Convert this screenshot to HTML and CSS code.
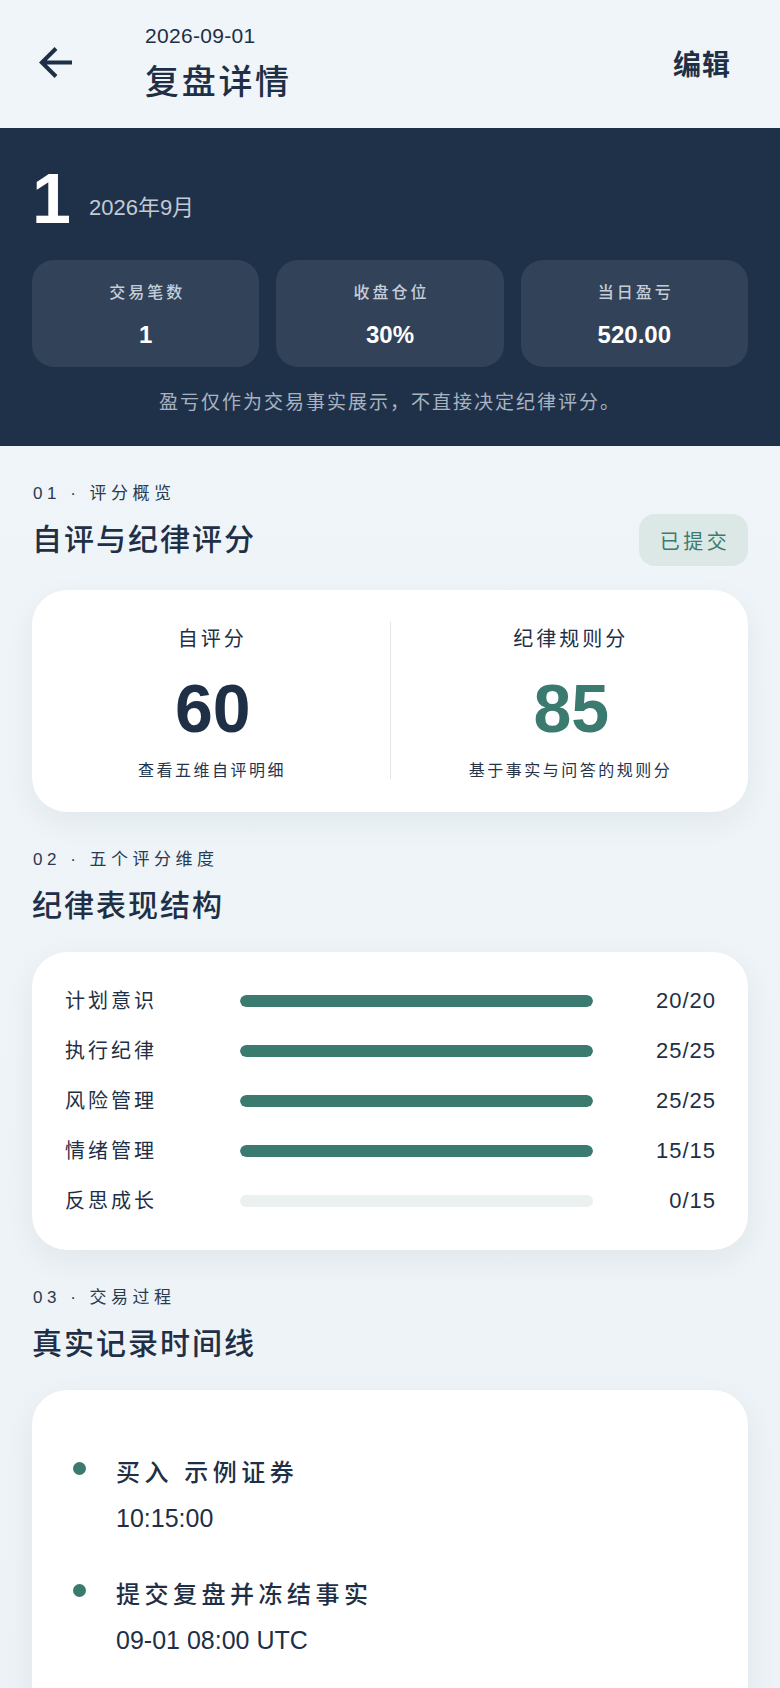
FILE: index.html
```
<!DOCTYPE html>
<html lang="zh-CN">
<head>
<meta charset="utf-8">
<title>复盘详情</title>
<link rel="stylesheet" href="styles.css">
</head>
<body>
<div class="page">
  <header class="topbar">
    <div class="back">
      <svg width="34" height="32" viewBox="0 0 34 32" aria-hidden="true">
        <path d="M17 1.5 L2.8 15.5 L17 29.5 M3 15.5 H33" fill="none" stroke="#1e2f46" stroke-width="4" stroke-linejoin="miter"/>
      </svg>
    </div>
    <div class="titles">
      <div class="date">2026-09-01</div>
      <h1 class="title">复盘详情</h1>
    </div>
    <div class="edit">编辑</div>
  </header>

  <section class="hero">
    <div class="hero-top">
      <div class="day">1</div>
      <div class="month">2026年9月</div>
    </div>
    <div class="stats">
      <div class="stat"><div class="stat-label">交易笔数</div><div class="stat-value">1</div></div>
      <div class="stat"><div class="stat-label">收盘仓位</div><div class="stat-value">30%</div></div>
      <div class="stat"><div class="stat-label">当日盈亏</div><div class="stat-value">520.00</div></div>
    </div>
    <p class="note">盈亏仅作为交易事实展示，不直接决定纪律评分。</p>
  </section>

  <section class="section">
    <div class="sec-label">01 · 评分概览</div>
    <div class="sec-row">
      <h2 class="sec-title">自评与纪律评分</h2>
      <span class="badge">已提交</span>
    </div>
    <div class="card score-card">
      <div class="score-col">
        <div class="score-label">自评分</div>
        <div class="score-num">60</div>
        <div class="score-sub">查看五维自评明细</div>
      </div>
      <div class="divider"></div>
      <div class="score-col">
        <div class="score-label">纪律规则分</div>
        <div class="score-num green">85</div>
        <div class="score-sub">基于事实与问答的规则分</div>
      </div>
    </div>
  </section>

  <section class="section">
    <div class="sec-label">02 · 五个评分维度</div>
    <div class="sec-row">
      <h2 class="sec-title">纪律表现结构</h2>
    </div>
    <div class="card bars-card">
      <div class="bar-row"><span class="bar-label">计划意识</span><div class="bar"><div class="bar-fill" style="width:100%"></div></div><span class="bar-val">20/20</span></div>
      <div class="bar-row"><span class="bar-label">执行纪律</span><div class="bar"><div class="bar-fill" style="width:100%"></div></div><span class="bar-val">25/25</span></div>
      <div class="bar-row"><span class="bar-label">风险管理</span><div class="bar"><div class="bar-fill" style="width:100%"></div></div><span class="bar-val">25/25</span></div>
      <div class="bar-row"><span class="bar-label">情绪管理</span><div class="bar"><div class="bar-fill" style="width:100%"></div></div><span class="bar-val">15/15</span></div>
      <div class="bar-row"><span class="bar-label">反思成长</span><div class="bar"><div class="bar-fill" style="width:0%"></div></div><span class="bar-val">0/15</span></div>
    </div>
  </section>

  <section class="section">
    <div class="sec-label">03 · 交易过程</div>
    <div class="sec-row">
      <h2 class="sec-title">真实记录时间线</h2>
    </div>
    <div class="card timeline-card">
      <div class="tl-item">
        <span class="tl-dot"></span>
        <div class="tl-body">
          <div class="tl-title">买入 示例证券</div>
          <div class="tl-time">10:15:00</div>
        </div>
      </div>
      <div class="tl-item">
        <span class="tl-dot"></span>
        <div class="tl-body">
          <div class="tl-title">提交复盘并冻结事实</div>
          <div class="tl-time">09-01 08:00 UTC</div>
        </div>
      </div>
    </div>
  </section>
</div>
</body>
</html>
```
FILE: styles.css
```
* { box-sizing: border-box; }
html, body { margin: 0; padding: 0; }
body {
  font-family: "Liberation Sans", "Noto Sans CJK SC", sans-serif;
  color: #1e2f46;
  background: #eef4f7;
}
.page {
  width: 780px;
  min-height: 1688px;
  background: linear-gradient(#eff5f8, #ecf2f5);
  overflow: hidden;
}

/* top bar */
.topbar {
  display: flex;
  align-items: center;
  height: 128px;
  padding: 24px 49px 26px 39px;
}
.back { width: 34px; height: 32px; margin-right: 72px; display: flex; }
.titles { flex: 1; }
.date { font-size: 21px; line-height: 24px; letter-spacing: 0.3px; color: #1e2f46; }
.title {
  margin: 14px 0 0;
  font-size: 34px;
  line-height: 40px;
  font-weight: 500;
  letter-spacing: 2.7px;
}
.edit {
  font-size: 28px;
  line-height: 34px;
  font-weight: 700;
  letter-spacing: 1px;
  margin-top: 6px;
}

/* hero */
.hero {
  background: #1f3149;
  padding: 36px 32px 30px;
}
.hero-top { display: flex; align-items: flex-end; }
.day {
  font-size: 70px;
  line-height: 70px;
  font-weight: 700;
  color: #ffffff;
}
.month {
  font-size: 22px;
  line-height: 26px;
  color: #c2cad5;
  margin: 0 0 13px 18px;
}
.stats {
  margin-top: 26px;
  display: grid;
  grid-template-columns: repeat(3, 1fr);
  gap: 17px;
}
.stat {
  background: #324359;
  border-radius: 22px;
  padding: 22px 0 17px;
  display: flex;
  flex-direction: column;
  align-items: center;
  gap: 16px;
}
.stat-label {
  font-size: 16px;
  line-height: 22px;
  letter-spacing: 3px;
  font-weight: 500;
  color: #c5cdd7;
  padding-left: 3px;
}
.stat-value {
  font-size: 24px;
  line-height: 30px;
  font-weight: 700;
  color: #ffffff;
}
.note {
  margin: 23px 0 0;
  text-align: center;
  font-size: 19px;
  line-height: 26px;
  letter-spacing: 2px;
  color: #a8b3c1;
}

/* sections */
.section { padding: 37px 32px 0; }
.sec-label {
  font-size: 17px;
  line-height: 22px;
  letter-spacing: 4.5px;
  color: #2a3a50;
  padding-left: 1px;
}
.sec-row {
  margin-top: 9px;
  min-height: 52px;
  display: flex;
  align-items: center;
  justify-content: space-between;
}
.sec-title {
  margin: 0;
  font-size: 30px;
  line-height: 38px;
  font-weight: 500;
  letter-spacing: 2px;
}
.badge {
  width: 109px;
  height: 52px;
  border-radius: 16px;
  background: #dce8e6;
  color: #3b7a6f;
  font-size: 20px;
  letter-spacing: 3.5px;
  display: flex;
  align-items: center;
  justify-content: center;
  padding-left: 3px;
}
.card {
  background: #ffffff;
  border-radius: 35px;
  box-shadow: 0 10px 30px rgba(30, 47, 70, 0.06);
  margin-top: 20px;
}

/* score card */
.score-card {
  margin-top: 24px;
  display: grid;
  grid-template-columns: 1fr 1px 1fr;
}
.score-col {
  padding: 35px 0 30px;
  display: flex;
  flex-direction: column;
  align-items: center;
}
.score-label {
  font-size: 20px;
  line-height: 28px;
  letter-spacing: 3px;
  padding-left: 3px;
}
.score-num {
  margin-top: 21px;
  font-size: 68px;
  line-height: 68px;
  font-weight: 700;
  color: #1e2f46;
  padding-left: 4px;
}
.score-num.green { color: #3b7a6f; }
.score-sub {
  margin-top: 18px;
  font-size: 16px;
  line-height: 22px;
  letter-spacing: 2.5px;
  padding-left: 2.5px;
  color: #24354b;
}
.divider {
  background: #e2e6ea;
  margin: 32px 0 33px;
}

/* bars */
.bars-card { padding: 24px 33px; }
.bar-row {
  height: 50px;
  display: grid;
  grid-template-columns: 175px 1fr 122px;
  align-items: center;
}
.bar-label {
  font-size: 20px;
  line-height: 28px;
  letter-spacing: 3px;
}
.bar {
  height: 12px;
  border-radius: 6px;
  background: #ebf0f0;
  overflow: hidden;
}
.bar-fill {
  height: 100%;
  border-radius: 6px;
  background: #3b7a6f;
}
.bar-val {
  text-align: right;
  font-size: 22px;
  line-height: 28px;
  letter-spacing: 1px;
  margin-right: -1px;
}

/* timeline */
.timeline-card {
  padding: 67px 41px 90px;
}
.tl-item {
  display: flex;
  gap: 30px;
}
.tl-item + .tl-item { margin-top: 45px; }
.tl-dot {
  flex: none;
  width: 13px;
  height: 13px;
  border-radius: 50%;
  background: #3b7a6f;
  margin-top: 5px;
}
.tl-title {
  font-size: 24px;
  line-height: 32px;
  font-weight: 500;
  letter-spacing: 4.5px;
}
.tl-time {
  margin-top: 13px;
  font-size: 25px;
  line-height: 32px;
}
```
